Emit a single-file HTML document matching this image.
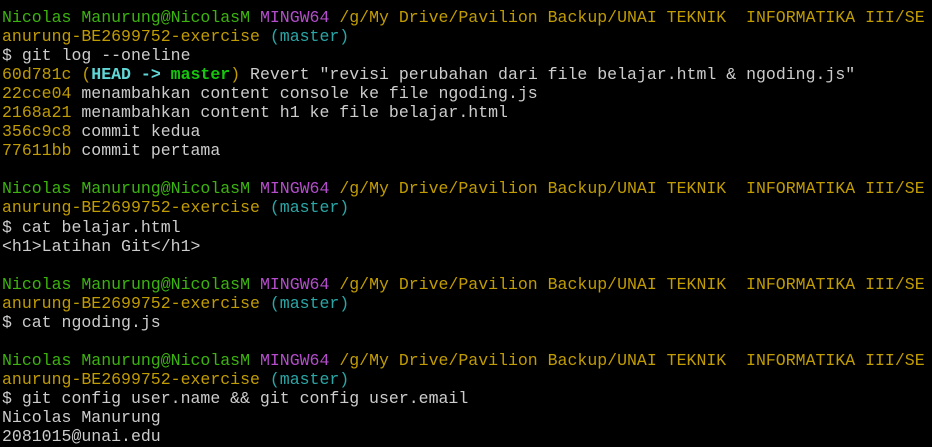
<!DOCTYPE html>
<html><head><meta charset="utf-8"><style>
html,body{margin:0;padding:0;background:#000;width:932px;height:447px;overflow:hidden}
pre{margin:0;padding:8px 0 0 2px;font-family:"Liberation Mono","DejaVu Sans Mono",monospace;font-size:16.55px;line-height:19.05px;color:#cccccc;white-space:pre}
.g{color:#3cb30e}.m{color:#b44ccc}.y{color:#c19c00}.c{color:#2aa6a6}
.hc{color:#61d6d6;font-weight:bold}.hg{color:#16c60c;font-weight:bold}
</style></head><body><pre><span class="g">Nicolas Manurung@NicolasM</span> <span class="m">MINGW64</span> <span class="y">/g/My Drive/Pavilion Backup/UNAI TEKNIK  INFORMATIKA III/SE</span>
<span class="y">anurung-BE2699752-exercise</span> <span class="c">(master)</span>
$ git log --oneline
<span class="y">60d781c (</span><span class="hc">HEAD -&gt; </span><span class="hg">master</span><span class="y">)</span> Revert "revisi perubahan dari file belajar.html &amp; ngoding.js"
<span class="y">22cce04</span> menambahkan content console ke file ngoding.js
<span class="y">2168a21</span> menambahkan content h1 ke file belajar.html
<span class="y">356c9c8</span> commit kedua
<span class="y">77611bb</span> commit pertama

<span class="g">Nicolas Manurung@NicolasM</span> <span class="m">MINGW64</span> <span class="y">/g/My Drive/Pavilion Backup/UNAI TEKNIK  INFORMATIKA III/SE</span>
<span class="y">anurung-BE2699752-exercise</span> <span class="c">(master)</span>
$ cat belajar.html
&lt;h1&gt;Latihan Git&lt;/h1&gt;

<span class="g">Nicolas Manurung@NicolasM</span> <span class="m">MINGW64</span> <span class="y">/g/My Drive/Pavilion Backup/UNAI TEKNIK  INFORMATIKA III/SE</span>
<span class="y">anurung-BE2699752-exercise</span> <span class="c">(master)</span>
$ cat ngoding.js

<span class="g">Nicolas Manurung@NicolasM</span> <span class="m">MINGW64</span> <span class="y">/g/My Drive/Pavilion Backup/UNAI TEKNIK  INFORMATIKA III/SE</span>
<span class="y">anurung-BE2699752-exercise</span> <span class="c">(master)</span>
$ git config user.name &amp;&amp; git config user.email
Nicolas Manurung
2081015@unai.edu</pre></body></html>
